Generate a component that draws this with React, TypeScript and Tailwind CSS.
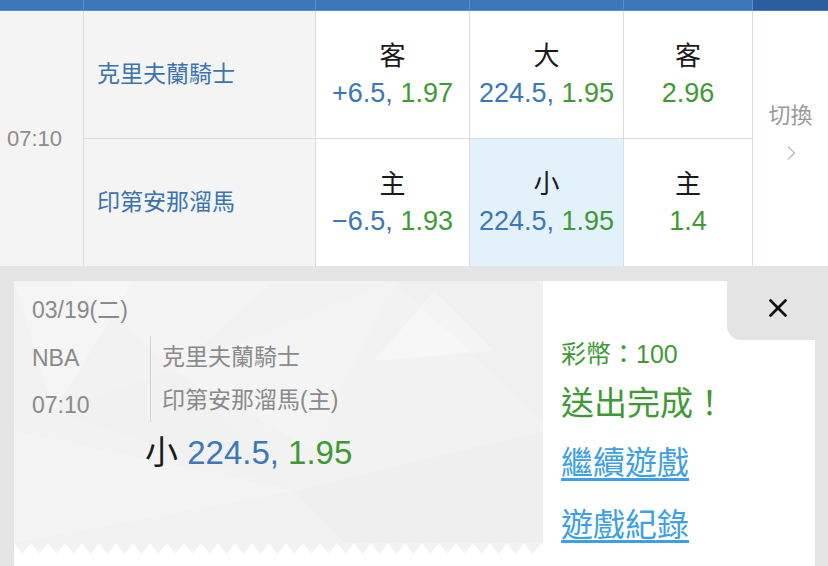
import { X } from "lucide-react";

const rows = [
  { team: "克里夫蘭騎士", spread: ["客", "+6.5,", "1.97"], total: ["大", "224.5,", "1.95"], ml: ["客", "2.96"], picked: false },
  { team: "印第安那溜馬", spread: ["主", "−6.5,", "1.93"], total: ["小", "224.5,", "1.95"], ml: ["主", "1.4"], picked: true },
];

function OddsCell({ label, blue, green, picked, last }: { label: string; blue?: string; green: string; picked?: boolean; last?: boolean }) {
  return (
    <div
      className={`flex flex-col items-center justify-center border-r border-[#d5dde5] ${last ? "" : "border-b"} ${
        picked ? "bg-[#e3f1fb]" : "bg-white"
      }`}
    >
      <span className="text-[26px] leading-[37px] text-[#1a1a1a]">{label}</span>
      <span className="text-[27px] leading-[37px] whitespace-nowrap">
        {blue && <span className="text-[#3b78b9]">{blue} </span>}
        <span className="text-[#3f9a36]">{green}</span>
      </span>
    </div>
  );
}

function TicketPattern() {
  return (
    <svg className="absolute inset-0 h-full w-full" viewBox="0 0 529 262" preserveAspectRatio="none">
      <polygon points="0,0 120,0 40,130" fill="#ffffff" opacity="0.25" />
      <polygon points="60,0 260,0 160,90" fill="#ffffff" opacity="0.15" />
      <polygon points="0,150 280,210 0,262" fill="#ffffff" opacity="0.2" />
      <polygon points="280,210 529,150 529,262 330,262" fill="#ececec" opacity="0.35" />
      <polygon points="380,0 529,0 529,140" fill="#eeeeee" opacity="0.4" />
      <polygon points="420,10 480,70 360,80" fill="#ffffff" opacity="0.3" />
      <polygon points="160,90 380,0 300,170" fill="#f8f8f8" opacity="0.3" />
      <polygon points="40,130 160,90 280,210" fill="#efefef" opacity="0.25" />
    </svg>
  );
}

function Zigzag() {
  return (
    <svg className="block h-[12px] w-full" viewBox="0 0 529 12" preserveAspectRatio="none">
      <defs>
        <pattern id="zz" width="17" height="12" patternUnits="userSpaceOnUse">
          <polygon points="0,0 17,0 8.5,11" fill="#f2f2f2" />
        </pattern>
      </defs>
      <rect width="529" height="12" fill="url(#zz)" />
    </svg>
  );
}

export default function App() {
  return (
    <div className="h-[566px] w-[828px] overflow-hidden bg-white font-['Liberation_Sans','Noto_Sans_CJK_TC',sans-serif]">
      {/* odds table */}
      <div className="grid grid-cols-[84px_232px_154px_154px_129px_75px] grid-rows-[11px_128px_127px]">
        <div className="border-r border-b border-[#5b8fc9] bg-[#3a77b8]" />
        <div className="border-r border-b border-[#5b8fc9] bg-[#3a77b8]" />
        <div className="border-r border-b border-[#5b8fc9] bg-[#3a77b8]" />
        <div className="border-r border-b border-[#5b8fc9] bg-[#3a77b8]" />
        <div className="border-r border-b border-[#5b8fc9] bg-[#3a77b8]" />
        <div className="border-b border-[#4a7cba] bg-[#2a5c9e]" />

        <div className="row-span-2 flex items-center border-r border-[#d5dde5] bg-[#f4f4f4] pl-[7px] text-[22px] text-[#8c8c8c]">
          07:10
        </div>
        {rows.map((r, i) => {
          const last = i === rows.length - 1;
          return [
            <div
              key={`t${i}`}
              className={`flex items-center border-r border-[#d5dde5] bg-[#f4f4f4] pl-[13px] text-[23px] text-[#3a74b0] ${last ? "" : "border-b"}`}
            >
              {r.team}
            </div>,
            <OddsCell key={`s${i}`} label={r.spread[0]} blue={r.spread[1]} green={r.spread[2]} last={last} />,
            <OddsCell key={`o${i}`} label={r.total[0]} blue={r.total[1]} green={r.total[2]} picked={r.picked} last={last} />,
            <OddsCell key={`m${i}`} label={r.ml[0]} green={r.ml[1]} last={last} />,
            i === 0 ? (
              <div key="sw" className="row-span-2 flex flex-col items-center justify-center bg-white pb-[15px]">
                <span className="text-[22px] leading-[28px] text-[#9a9a9a]">切換</span>
                <svg className="mt-[15px] h-[16px] w-[10px]" viewBox="0 0 10 16" fill="none">
                  <path d="M2 1.5 L8.5 8 L2 14.5" stroke="#c2c2c2" strokeWidth="1.6" />
                </svg>
              </div>
            ) : null,
          ];
        })}
      </div>

      {/* result popup */}
      <div className="relative h-[300px] bg-[#e4e4e4] pl-[14px] pr-[13px] pt-[15px]">
        <div className="flex h-full bg-white">
          <div className="w-[529px]">
            <div className="relative h-[262px] overflow-hidden bg-[#f2f2f2]">
              <TicketPattern />
              <div className="relative pl-[18px] pt-[14px] text-[23px] leading-[30px] text-[#8a8a8a]">
                <div>03/19(二)</div>
                <div className="mt-[11px] flex">
                  <div className="flex w-[118px] flex-col gap-[17px] pt-[7px]">
                    <span>NBA</span>
                    <span>07:10</span>
                  </div>
                  <div className="flex flex-col gap-[13px] border-l border-[#d2d2d2] pb-[7px] pl-[11px] pt-[6px]">
                    <span>克里夫蘭騎士</span>
                    <span>印第安那溜馬(主)</span>
                  </div>
                </div>
                <div className="ml-[113px] mt-[11px] text-[33px] leading-[40px]">
                  <span className="text-[#1a1a1a]">小 </span>
                  <span className="text-[#3b78b9]">224.5, </span>
                  <span className="text-[#3f9a36]">1.95</span>
                </div>
              </div>
            </div>
            <Zigzag />
          </div>

          <div className="flex flex-1 flex-col items-start pl-[18px] pt-[57px]">
            <span className="text-[25px] leading-[32px] text-[#3f9a36]">彩幣：100</span>
            <span className="mt-[13px] text-[33px] leading-[42px] text-[#3f9a36]">送出完成！</span>
            <a className="mt-[17px] text-[32px] leading-[42px] text-[#3d9fe6] underline underline-offset-[4px]">繼續遊戲</a>
            <a className="mt-[20px] text-[32px] leading-[42px] text-[#3d9fe6] underline underline-offset-[4px]">遊戲紀錄</a>
          </div>
        </div>

        <button className="absolute right-0 top-0 flex h-[74px] w-[101px] items-center justify-center rounded-bl-[14px] bg-[#e4e4e4] pt-[10px]">
          <X className="h-[30px] w-[30px] text-[#111]" strokeWidth={2.2} />
        </button>
      </div>
    </div>
  );
}
